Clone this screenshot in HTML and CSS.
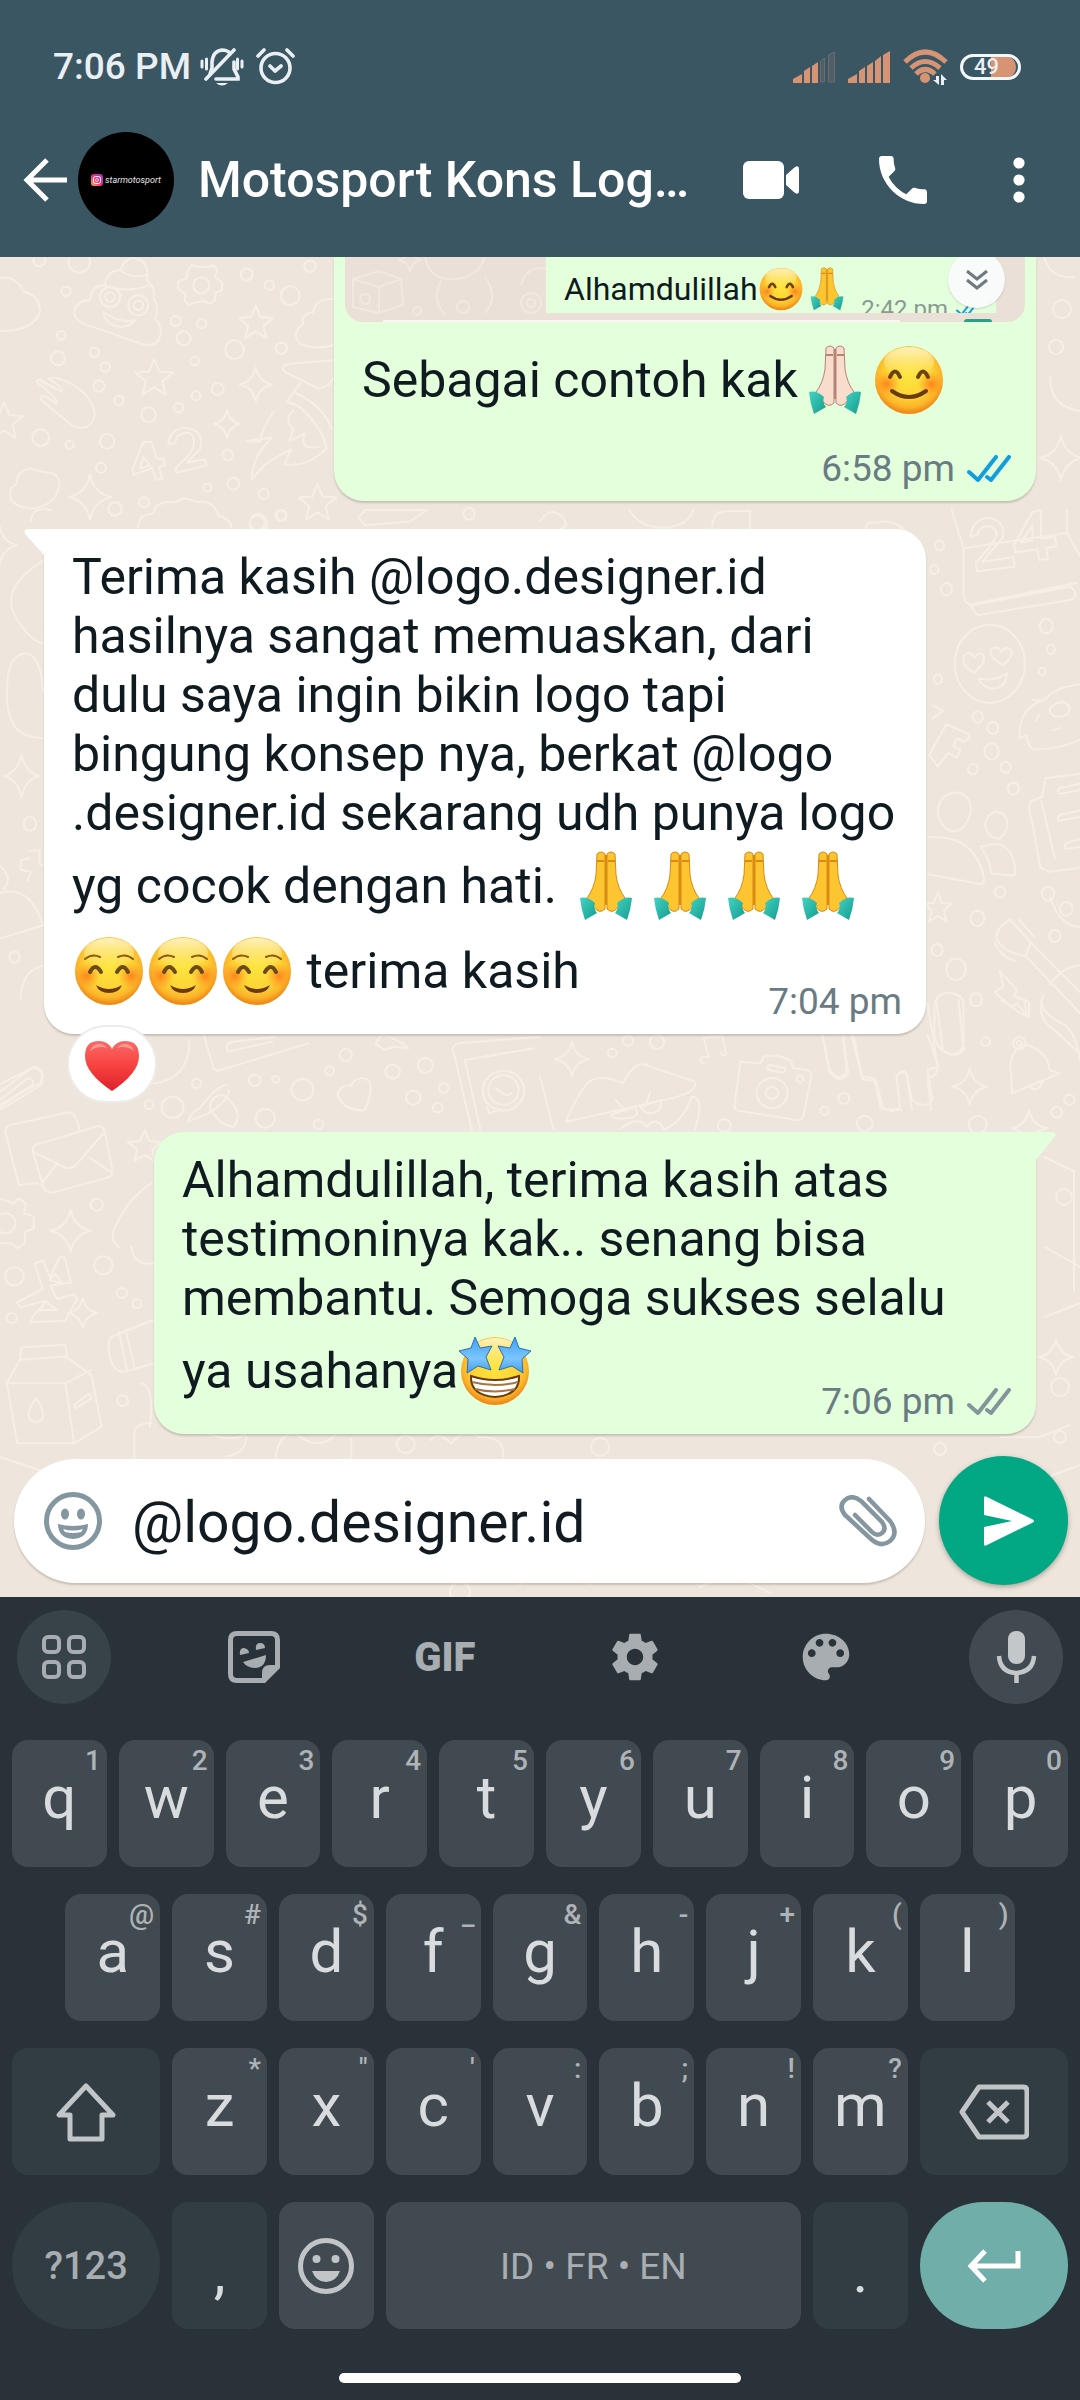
FILE: index.html
```
<!DOCTYPE html>
<html lang="id">
<head>
<meta charset="utf-8">
<meta name="viewport" content="width=device-width, initial-scale=1">
<title>Motosport Kons Logo</title>
<link rel="stylesheet" href="styles.css">
</head>
<body>
<svg class="defs" aria-hidden="true">
  <defs>
    <radialGradient id="gFace" cx="50%" cy="42%" r="56%">
      <stop offset="0" stop-color="#fde63f"/><stop offset=".6" stop-color="#fcd435"/><stop offset=".85" stop-color="#fbb52a"/><stop offset="1" stop-color="#ef8a17"/>
    </radialGradient>
    <linearGradient id="gShine" x1="0" y1="0" x2="0" y2="1">
      <stop offset="0" stop-color="#fff6cf" stop-opacity=".9"/><stop offset="1" stop-color="#fff2a0" stop-opacity="0"/>
    </linearGradient>
    <radialGradient id="gBlush"><stop offset="0" stop-color="#ff6a13" stop-opacity=".75"/><stop offset="1" stop-color="#ff8a1c" stop-opacity="0"/></radialGradient>
    <linearGradient id="gCuff" x1="0" y1="0" x2="1" y2="1"><stop offset="0" stop-color="#45d3c0"/><stop offset="1" stop-color="#139c92"/></linearGradient>
    <linearGradient id="gStar" x1="0" y1="0" x2="0" y2="1"><stop offset="0" stop-color="#3aa0f5"/><stop offset=".6" stop-color="#7cc6fb"/><stop offset="1" stop-color="#3f9df0"/></linearGradient>
    <linearGradient id="gHeart" x1="0" y1="0" x2="0" y2="1"><stop offset="0" stop-color="#fb6a66"/><stop offset=".5" stop-color="#f7423f"/><stop offset="1" stop-color="#de1f2c"/></linearGradient>
    <linearGradient id="gInsta" x1="0" y1="1" x2="1" y2="0"><stop offset="0" stop-color="#fdb24a"/><stop offset=".5" stop-color="#ee2a7b"/><stop offset="1" stop-color="#8a3ad0"/></linearGradient>
    <symbol id="base" viewBox="0 0 74 70">
      <circle cx="37" cy="35" r="34" fill="url(#gFace)"/>
      <ellipse cx="37" cy="17" rx="25" ry="15" fill="url(#gShine)"/>
    </symbol>
    <symbol id="smile" viewBox="0 0 74 70">
      <use href="#base"/>
      <circle cx="15" cy="39" r="13" fill="url(#gBlush)"/><circle cx="59" cy="39" r="13" fill="url(#gBlush)"/>
      <path d="M18 32q5-11 10 0M46 32q5-11 10 0" fill="none" stroke="#6b4210" stroke-width="4" stroke-linecap="round"/>
      <path d="M20 46q17 12 34 0" fill="none" stroke="#6b3a0c" stroke-width="4" stroke-linecap="round"/>
    </symbol>
    <symbol id="relaxed" viewBox="0 0 74 70">
      <use href="#base"/>
      <circle cx="15" cy="40" r="13" fill="url(#gBlush)"/><circle cx="59" cy="40" r="13" fill="url(#gBlush)"/>
      <path d="M13 23q7-6 15-2M61 23q-7-6-15-2" fill="none" stroke="#8a5a16" stroke-width="2" stroke-linecap="round"/>
      <path d="M18 36q5-10 11 0M45 36q6-10 11 0" fill="none" stroke="#6b4a1c" stroke-width="4" stroke-linecap="round"/>
      <path d="M24 49q13 8 26 0-3 8-13 8t-13-8z" fill="#6b3a0c"/>
    </symbol>
    <symbol id="pray" viewBox="0 0 74 70">
      <g stroke-linejoin="round">
        <path d="M28 3Q32-1 36 3V58Q30 64 24 55L18 47Q25 38 27 24Z" fill="currentColor" stroke="var(--edge)"/>
        <path d="M46 3Q42-1 38 3V58Q44 64 50 55L56 47Q49 38 47 24Z" fill="currentColor" stroke="var(--edge)"/>
        <path d="M37 4V54M28 10h7M39 10h7" stroke="var(--edge)" stroke-width="2" fill="none"/>
        <path d="M11 47Q18 45 26 52 24 57 28 62L16 69Q12 58 11 47Z" fill="url(#gCuff)"/>
        <path d="M63 47Q56 45 48 52 50 57 46 62L58 69Q62 58 63 47Z" fill="url(#gCuff)"/>
      </g>
    </symbol>
    <symbol id="starstruck" viewBox="0 0 74 70">
      <use href="#base"/>
      <path d="M13 40Q37 48 61 40 62 59 37 61 12 59 13 40Z" fill="#fff" stroke="#6b3a0c" stroke-width="2"/>
      <path d="M14 46q23 6 46 0M17 53q20 5 40 0" fill="none" stroke="#a9733c" stroke-width="2"/>
      <g fill="url(#gStar)" stroke="#2f6fb0" stroke-width="1" stroke-linejoin="round">
        <path d="M17 1l5 11 12-2-6 11 5 13-13-4-11 7 1-14L1 15l12-3z"/>
        <path d="M57 1l-5 11-12-2 6 11-5 13 13-4 11 7-1-14 9-8-12-3z"/>
      </g>
    </symbol>
    <symbol id="heart" viewBox="0 0 54 50">
      <path d="M27 50Q0 32 0 15 0 0 14 0 23 0 27 8 31 0 40 0 54 0 54 15 54 32 27 50z" fill="url(#gHeart)"/>
      <path d="M5 10Q7 3 14 3q5 0 8 4-9-3-17 3zM32 7q3-4 8-4 7 0 9 7-8-6-17-3z" fill="#fff" opacity=".35"/>
    </symbol>
    <symbol id="ticks" viewBox="0 0 44 28">
      <path d="M2 17l9 8L29 2M20 22l4 3L42 2" fill="none" stroke="currentColor" stroke-width="4" stroke-linecap="round" stroke-linejoin="round"/>
    </symbol>
    <symbol id="sp" viewBox="-20 -20 40 40" overflow="visible"><path d="M0-18Q3-3 17 0 3 3 0 18-3 3-17 0-3-3 0-18z"/></symbol>
    <symbol id="st" viewBox="-20 -20 40 40" overflow="visible"><path d="M0-18l5 12 13 1-10 8 3 13-11-7-11 7 3-13-10-8 13-1z"/></symbol>
  </defs>
</svg>

<header class="top">
  <div class="status">
    <span class="clock">7:06 PM</span>
    <svg class="bell" viewBox="0 0 44 38" fill="none" stroke="currentColor" stroke-width="3.6" stroke-linecap="round">
      <path d="M2 13v6M6.500 11v10M42 13v6M37.500 11v10" stroke-width="3"/>
      <path d="M12 20v-6Q13 3 22 2q5 0 8 3M34 14v7l4 8v2H16M12 20l-2 6"/>
      <path d="M34 2L6 31"/><path d="M16 35h12q-6 5-12 0z" fill="currentColor" stroke="none"/>
    </svg>
    <svg class="alarm" viewBox="0 0 39 37" fill="none" stroke="currentColor" stroke-width="3.600" stroke-linecap="round" stroke-linejoin="round">
      <circle cx="19.500" cy="20" r="14.500"/><path d="M14 18l5 5 6-5M2 8l6-6M37 8l-6-6"/>
    </svg>
    <span class="grow"></span>
    <svg class="signal" viewBox="0 0 43 32" fill="#d69474"><path d="M0 32v-4l9-5v9zM11 32V20l6-4v16zM19 32V15l6-4v21z"/><path d="M27.500 31V10l4-3v24zM35.500 31V4l6-3v30z" fill="#4f5e67" stroke="#6a6d6f"/></svg>
    <svg class="signal" viewBox="0 0 43 32" fill="#d69474"><path d="M0 32v-4l9-5v9zM11 32V20l6-4v16zM19 32V15l6-4v21zM27 32V10l6-5v27zM35 32V4l7-4v32z"/></svg>
    <svg class="wifi" viewBox="0 0 45 36"><g fill="none" stroke="#d69474" stroke-width="5"><path d="M2 13Q22-7 43 13M8 19q14-13 29 0M13 25q9-9 19 0"/></g><circle cx="22" cy="29" r="5" fill="#d69474"/><path d="M30 31h3v-4h3v9zM38 36V25l6 6h-3v5z" fill="#e9eff2"/></svg>
    <span class="battery">49</span>
  </div>
  <div class="appbar">
    <button class="icon-btn back" aria-label="Kembali"><svg viewBox="0 0 44 44" fill="none" stroke="currentColor" stroke-width="5"><path d="M44 22H4M24 2L4 22l20 20"/></svg></button>
    <span class="avatar"><svg viewBox="0 0 12 12"><rect width="12" height="12" rx="3" fill="url(#gInsta)"/><rect x="2.500" y="2.500" width="7" height="7" rx="2" fill="none" stroke="#fff"/><circle cx="6" cy="6" r="1.500" fill="none" stroke="#fff" stroke-width=".8"/></svg><i>starmotosport</i></span>
    <h1>Motosport Kons Log…</h1>
    <button class="icon-btn video" aria-label="Panggilan video"><svg viewBox="0 0 56 38" fill="currentColor"><rect width="41" height="38" rx="6"/><path d="M43 14l9-8q4-2 4 2v22q0 4-4 2l-9-8z"/></svg></button>
    <button class="icon-btn phone" aria-label="Panggilan suara"><svg viewBox="3 3 18 18" fill="currentColor"><path d="M6.620 10.790c1.440 2.830 3.760 5.140 6.590 6.590l2.200-2.200c.270-.270.670-.360 1.020-.240 1.120.370 2.330.570 3.570.570.550 0 1 .450 1 1V20c0 .550-.450 1-1 1-9.390 0-17-7.610-17-17 0-.550.450-1 1-1h3.500c.550 0 1 .450 1 1 0 1.250.200 2.450.570 3.570.110.350.030.740-.250 1.020l-2.200 2.200z"/></svg></button>
    <button class="icon-btn dots" aria-label="Menu"><svg viewBox="0 0 12 46" fill="currentColor"><circle cx="6" cy="6" r="5.600"/><circle cx="6" cy="23" r="5.600"/><circle cx="6" cy="40" r="5.600"/></svg></button>
  </div>
</header>

<main class="chat">
  <svg class="wallpaper" viewBox="0 0 1080 1340" preserveAspectRatio="xMidYMin slice" aria-hidden="true">
    <g transform="scale(.3333)">
      <path d="M0 62q50-5 70 42 50 10 50 60-20 60-120 58M270 130q5-50 45-45 5-45 45-45 20-45 50-35 40 10 30 65 30 20 20 55 20 20 5 60 30 30 10 65-15 20-45 12L250 200q-40-20-20-55 15-15 40-15zM310 165q50 35 95 25-20 25-55 18-35-8-40-43zM360 38q30 30 80 15M315 85q60 25 135 0"/>
      <circle cx="330" cy="120" r="30"/><circle cx="415" cy="145" r="30"/><circle cx="330" cy="120" r="14"/><circle cx="415" cy="145" r="14"/>
      <path d="M575 25l20 5h25l20-5 12 15-8 20 22 15v25l-20 8v20l-15 12-20-8-30 5-15 8-12-15 2-20-22-15v-20l25-10 3-20z"/><circle cx="604" cy="85" r="24"/>
      <path d="M1000 125q-55 0-60 40-40 10-30 35-40 30-10 60 40 20 100 5M1000 310l-130 10q-35 5-15 25 60 30 100 50 30-5 45-30M900 380l-40 55M880 405q90 40 115 110M860 435q40 10 50 25 60 60 70 115M820 465q-35 50-40 90l-40-3 75-10q-60 60-60 125l40-45q30-20 78-45l-20 45q70 10 130-50M880 460q-30 30 0 55l-10 35 45-20q-20 50 40 40"/>
      <path d="M110 375q5-15 20 0l55 30q5-15-40-40 5-10 45 5 80 30 95 100-10 60-70 35L125 430q-10-20 15-10l30 20q5-15-60-65z"/>
      <path d="M50 680q0-40 40-45l40 10q50 0 48 40-10 60-80 70-80-5-65-60zM415 810q0-40 45-40 5-40 70-35 20-20 60 0 50-10 65 40 40 15 40 35"/>
      <use href="#st" x="400" y="300" width="125" height="125"/><use href="#st" x="710" y="140" width="115" height="115"/><use href="#st" x="-50" y="430" width="125" height="125"/><use href="#st" x="890" y="675" width="125" height="125"/>
      <use href="#sp" x="710" y="325" width="115" height="115"/><use href="#sp" x="635" y="455" width="92" height="92"/><use href="#sp" x="195" y="645" width="150" height="150"/><use href="#sp" x="-60" y="805" width="120" height="120"/>
      <circle cx="238" cy="15" r="32"/><circle cx="118" cy="10" r="18"/><circle cx="198" cy="103" r="14"/><circle cx="184" cy="235" r="13"/><circle cx="174" cy="304" r="21"/><circle cx="283" cy="286" r="14"/><circle cx="316" cy="330" r="14"/><circle cx="297" cy="387" r="17"/><circle cx="357" cy="430" r="14"/><circle cx="446" cy="473" r="22"/><circle cx="536" cy="452" r="14"/><circle cx="588" cy="416" r="13"/><circle cx="653" cy="396" r="18"/><circle cx="551" cy="244" r="21"/><circle cx="527" cy="192" r="15"/><circle cx="605" cy="200" r="14"/><circle cx="584" cy="312" r="13"/><circle cx="704" cy="278" r="28"/><circle cx="844" cy="274" r="17"/><circle cx="740" cy="53" r="18"/><circle cx="808" cy="85" r="14"/><circle cx="871" cy="116" r="28"/><circle cx="930" cy="28" r="17"/><circle cx="122" cy="542" r="25"/><circle cx="209" cy="564" r="12"/><circle cx="321" cy="553" r="22"/><circle cx="303" cy="632" r="15"/><circle cx="345" cy="756" r="20"/><circle cx="432" cy="736" r="15"/><circle cx="622" cy="692" r="12"/><circle cx="700" cy="680" r="18"/><circle cx="683" cy="594" r="16"/><circle cx="791" cy="711" r="15"/><circle cx="842" cy="775" r="16"/><circle cx="772" cy="798" r="22"/>
      <path d="M430 555l25 0 15 50 20 0 5 20-18 5 10 35-20 3-10-35-55 20-5-15zM430 600l-10 35 30-10zM505 560q5-45 50-48 60 5 45 65l-40 40 55-10 5 18-90 22-3-15q60-50 55-80-5-40-50-15-5 25-15 23z"/>
    </g>
    <g transform="translate(0 253) scale(.3444 .3827)">
      <path d="M130 130Q-20 210 60 300 90 340 125 350M20 480q0-110 60-105 40 10 45 100M20 480q0 120 105 115M0 930q40 30 10 60M0 1000q90-20 125 85L0 1120M60 1280q0-80 70-90M0 1560q80-50 115-60 20-40-15-45L0 1500"/>
      <path d="M85 890l30 0 0 35 15 5M80 970l10-25-30-5 0-25 25-5M150 0q-60-10-60 30M1060 40l-20-20 20-20 180 0-50 30z"/>
      <use href="#sp" x="0" y="630" width="125" height="130"/>
      <circle cx="87" cy="820" r="18"/><circle cx="42" cy="1168" r="15"/><circle cx="818" cy="15" r="14"/><circle cx="750" cy="35" r="25"/><circle cx="1362" cy="10" r="16"/>
    </g>
    <g transform="translate(540 253) scale(.3444 .3827)">
      <path d="M1195 0l35 100v120q0 30 30 25l300-55M1250 250l290-50q30 25 0 35l-270 40zM1230 100l300-40M1530 0v60l38 60M260 0q30 50 110 45 60-5 75-45M500 48q0-45 40-45l70 0v45M0 30q30-40 60-15t0 35M945 48q0-20 40-15 30-10 70 15"/>
      <path d="M1250 70q5-45 50-50 50 5 45 50l-60 65 90-12 3 25-110 12-2-22q60-60 60-75-5-25-35-20-20 5-20 22zM1430 5l25-5 0 75 40-5 5 25-30 5 5 28-25 3-5-28-65 8-3-20zM1430 40l-35 45 35-5z"/>
      <circle cx="1306" cy="402" r="102"/><path d="M1260 425q-40-20-28-45 15-15 30 5 20-20 28 0-2 20-30 40zM1345 405q-45-20-35-42 18-10 30 8 15-20 30-2 0 20-25 36zM1272 440q50 10 85-15-5 35-30 40-40 5-55-25z"/>
      <path d="M1568 455q-80 10-100 40-80 20-75 100l20-5q5 40 35 35 60 0 120-25M1480 520q30-30 55-10 10 30-30 30-25 0-25-20zM1430 495l25 5M1440 550l10-15M1490 575l20-5M1140 510l30 15-30 20M1130 640l50-80 65 25q5 15-15 20l-20-8-10 20 20 10-10 20-25-12-30 35zM1568 690l-100 10-10 50-30 10q-15 10 0 50l25 125 25 10 90-10M1455 760l40 150M1568 715l-60 12q-10 12 0 15l60-10M1568 785l-60 12q-10 12 0 15l60-10M1568 860l-40 10q-10 12 0 15l40-5"/>
      <path d="M1203 738q50 0 48 50-15 50-48 52-40-5-48-52 5-45 48-50zM1325 788q35 5 32 40-15 35-30 30-30-5-35-35 5-30 33-35zM1125 855q140-10 165 110 0 12-12 12l-150-25M1280 880q90-30 100 60 0 15-10 15l-60-5q0-30-30-70M1325 1120q0-30 40-50l60 60-15 35q-60-5-85-45zM1425 1130l143 130M1410 1165l158 150M1460 1270q-20 60 35 90l73 60M1320 1130q20 40 60 50M1390 1070l45 45M1480 1240q40-50 88-50M1335 1205l50 50-10 15 45 15 0 40-35-15-65-50 25-15zM1145 1370l0-70q5-40 40-38 45 0 45 35v90q-5 35-35 35-40-5-50-52M1125 1370l30 80q0 30-30 35M820 1370l20 90q30 40 50 5l-10-95M910 1370l25 110 35 5 20 80 60 3M1035 1480q20-25 30-5l15 93M1125 1485l10 83"/>
      <circle cx="1160" cy="93" r="13"/><circle cx="1145" cy="156" r="12"/><circle cx="1180" cy="207" r="16"/><circle cx="1470" cy="303" r="19"/><circle cx="1483" cy="364" r="12"/><circle cx="1458" cy="422" r="10"/><circle cx="1155" cy="442" r="12"/><circle cx="1271" cy="541" r="15"/><circle cx="1315" cy="569" r="16"/><circle cx="1311" cy="631" r="21"/><circle cx="1257" cy="677" r="14"/><circle cx="1352" cy="672" r="14"/><circle cx="1374" cy="728" r="16"/><circle cx="1336" cy="998" r="15"/><circle cx="1475" cy="1003" r="18"/><circle cx="1270" cy="1067" r="20"/><circle cx="1528" cy="1042" r="18"/><circle cx="1495" cy="1113" r="16"/><circle cx="1153" cy="1150" r="16"/><circle cx="1208" cy="1200" r="28"/><circle cx="1266" cy="1280" r="17"/>
      <use href="#st" x="1100" y="995" width="110" height="90"/>
    </g>
    <g transform="translate(0 773) scale(.3444 .3333)">
      <path d="M0 185l90-70q45 0 30 50L0 240M0 210l80-65q20 0 15 20L0 225M15 305q0-15 15-20l170-38q20 0 30 50M15 305l40 160 55-5M95 365q0-20 15-22l175-55q15 0 20 20l22 115q0 15-15 20l-160 45q-20 0-25-15zM100 368l90 45q20 5 30-8l80-95M118 465l45-60M325 428l-65-45"/>
      <path d="M590 10l30 105q5 10 20 5l255-80M660 60q-5-20 15-25L800 20M660 65l130-30M550 30q0 120-105 130M345 650q-30-20-10-60 40-90 105-130M380 650q10 60 65 50M0 505l40 15 15-15 20 15-5 30 28 10v35l-25 10 0 35-20 15-20-15H0"/><circle cx="15" cy="580" r="30"/>
      <path d="M100 700l25-8 20 50 28-60 15 0 18 75-60 10 20 40 50-15 8 15-35 65-100 5 5-15 40-50-75 20-10-15 75-40zM160 730l20 30-35-10zM135 815l30 25-50 0zM315 950q0-30 20-35l110-45M315 950q5 80 50 75l80-25M345 905l25 120M365 900l25 110"/>
      <path d="M60 960q0-8 10-8l120-8 5 35-135 10zM60 985l-40 75 30 180 165 0-25-180H22M190 980l75 55 30 155-80 50M190 1060l75-40M215 1125l45-35 5 15-45 30zM105 1105q-30 40-20 60 15 20 35 5 15-20-15-65zM390 1285v-80q5-25 50-25M410 1060q40 10 25 130"/>
      <path d="M545 275q10-30 35-40 50-70 80-70M545 275l60-25q60-40 60-70M610 235q0-40 40-40 60 50 30 95-40 0-70-55zM1060 240q-60 5-80-45 5-30 40-28 10-25 35-22 40 5 5 95zM1090 40l20-30 60 30 15 15-40-5-30 10zM1320 80q-15-30 10-40l240-20M1320 80l50 220M1350 90l200-35M1350 90l45 210"/><circle cx="1462" cy="182" r="60"/><circle cx="1462" cy="180" r="44"/><path d="M1440 175q30 30 45 15M1415 230l5 20 35-12"/>
      <use href="#st" x="360" y="295" width="120" height="110"/><use href="#sp" x="135" y="530" width="140" height="145"/><use href="#sp" x="190" y="800" width="100" height="100"/>
      <circle cx="433" cy="224" r="13"/><circle cx="501" cy="232" r="32"/><circle cx="571" cy="160" r="14"/><circle cx="739" cy="151" r="17"/><circle cx="800" cy="148" r="10"/><circle cx="770" cy="265" r="28"/><circle cx="878" cy="179" r="32"/><circle cx="957" cy="122" r="13"/><circle cx="1004" cy="75" r="18"/><circle cx="1140" cy="125" r="21"/><circle cx="1235" cy="106" r="22"/><circle cx="1200" cy="203" r="21"/><circle cx="1288" cy="174" r="14"/><circle cx="1271" cy="233" r="14"/><circle cx="925" cy="283" r="14"/><circle cx="281" cy="524" r="18"/><circle cx="300" cy="706" r="27"/><circle cx="42" cy="739" r="27"/><circle cx="354" cy="789" r="15"/><circle cx="397" cy="821" r="13"/><circle cx="34" cy="864" r="15"/><circle cx="356" cy="1112" r="16"/><circle cx="1178" cy="1243" r="26"/>
      <path d="M800 1285q10-80 60-75M860 1210q60 60 120 0M1020 1285v-60M600 1210q80 30 115 0 5 60-60 70M1250 1230q20-30 60 10 40-50 80-20 80 0 70 60"/>
    </g>
    <g transform="translate(540 743) scale(.3444 .3333)">
      <path d="M75 365q40-100 75-125 40-15 90 10 40-80 80-50l130 45q10 35-90 55L75 365zM205 345l70-25q20 30-20 35t-50-10zM290 320l60-20q10 40-40 40zM220 300l30 35M320 275l-15 45M235 385q50-40 75-5 30-35 50 10 60-30 80-100 40 0 10 100M0 230l40 160M585 185l55 5 10-20q50-10 80 15l5 20 40 5q15 5 12 20l-22 120q-5 12-20 10l-170-28q-12-5-10-20l15-110q0-15 5-17zM665 195l45 8q5 12-5 15l-40-8q-10-10 0-15z"/><circle cx="674" cy="279" r="45"/><circle cx="674" cy="279" r="18"/><circle cx="755" cy="237" r="10"/>
      <path d="M475 190q-20-10 0-22l15 5-15-60 55-5 10 55q-10 10-15-5M820 105l20 110q30 40 55 5l-15-115M905 105l30 130q10 10 40 5l20 80q30 25 50 0l-10-90q10-20 30-10l15 80q40 30 60 0l-15-90 30-10-30-190M1150 0l20 150q30 30 60 0L1215 0M1340 0l30 20 15-10 30 40-10-50M1455 0q0 40 60 70 40 20 53 110M1370 280q0-50-5-80 5-60 50-65 60 20 65 75l28 10-80 35zM1425 262q20 20 35-20"/><circle cx="1392" cy="130" r="18"/><circle cx="1392" cy="130" r="7"/>
      <use href="#sp" x="35" y="120" width="115" height="115"/><use href="#sp" x="1185" y="200" width="125" height="120"/><use href="#sp" x="1360" y="325" width="120" height="120"/>
      <circle cx="255" cy="122" r="15"/><circle cx="210" cy="159" r="13"/><circle cx="340" cy="126" r="21"/><circle cx="882" cy="295" r="16"/><circle cx="826" cy="332" r="12"/><circle cx="943" cy="370" r="23"/><circle cx="535" cy="377" r="19"/><circle cx="1294" cy="125" r="13"/><circle cx="1500" cy="337" r="16"/><circle cx="1537" cy="299" r="15"/><circle cx="1271" cy="374" r="26"/>
    </g>
    <g>
      <path d="M1044 0q6 22 30 20M1050 120q0 30 30 34M1050 640q10 30 30 30M1045 990l35 20M1045 1060l35-14M1048 1220l32-12M1044 900l30 14v120M0 1200l60 20 4 60M300 1310q30-30 60 10M520 1328q40-40 70 0M700 1330l30-14 40 20M1000 1180h40l30-12"/>
      <circle cx="1062" cy="52" r="9"/><circle cx="1056" cy="90" r="7"/><circle cx="1064" cy="940" r="8"/><circle cx="1060" cy="1130" r="9"/><circle cx="940" cy="1192" r="6"/><circle cx="600" cy="1190" r="9"/><circle cx="460" cy="1335" r="10"/><circle cx="1060" cy="1180" r="6"/>
      <use href="#sp" x="1036" y="176" width="50" height="50"/><use href="#sp" x="1036" y="1080" width="40" height="40"/>
    </g>
  </svg>

  <article class="bubble sent first">
    <div class="photo">
      <svg class="photo-doodles" viewBox="0 0 201 65" aria-hidden="true"><path d="M8 22l26-8 22 8 2 26-24 8-26-6zM8 22l26 8 22-8M34 30v26M80 0q4 20 22 22 30 2 38-22M96 24q-10 20 4 34M140 20q14 20 0 36M176 28q6-20 25-16"/><circle cx="20" cy="42" r="5"/><circle cx="72" cy="54" r="4"/><circle cx="118" cy="50" r="6"/><circle cx="186" cy="46" r="10"/><circle cx="186" cy="46" r="4"/><use href="#sp" x="52" y="-10" width="26" height="26"/></svg>
      <div class="inner">
        <span class="inner-text">Alhamdulillah<svg class="emoji small" role="img" aria-label="😊"><use href="#smile"/></svg><svg class="emoji small pray" role="img" aria-label="🙏"><use href="#pray"/></svg></span>
        <span class="inner-time">2:42 pm <svg class="ticks read"><use href="#ticks"/></svg></span>
      </div>
      <span class="bar"></span><span class="dot"></span>
      <span class="jump"><svg viewBox="0 0 22 20" fill="none" stroke="currentColor" stroke-width="3"><path d="M1 1l10 8L21 1M1 10l10 8 10-8"/></svg></span>
    </div>
    <p>Sebagai contoh kak<svg class="emoji pray light" role="img" aria-label="🙏🏻"><use href="#pray"/></svg><svg class="emoji" role="img" aria-label="😊"><use href="#smile"/></svg></p>
    <div class="meta own-line"><time>6:58 pm</time><svg class="ticks read" role="img" aria-label="Dibaca"><use href="#ticks"/></svg></div>
  </article>

  <article class="bubble received">
    <p>Terima kasih @logo.designer.id<br>hasilnya sangat memuaskan, dari<br>dulu saya ingin bikin logo tapi<br>bingung konsep nya, berkat @logo<br>.designer.id sekarang udh punya logo<br>yg cocok dengan hati. <svg class="emoji pray" role="img" aria-label="🙏"><use href="#pray"/></svg><svg class="emoji pray" role="img" aria-label="🙏"><use href="#pray"/></svg><svg class="emoji pray" role="img" aria-label="🙏"><use href="#pray"/></svg><svg class="emoji pray" role="img" aria-label="🙏"><use href="#pray"/></svg><br><svg class="emoji" role="img" aria-label="☺️"><use href="#relaxed"/></svg><svg class="emoji" role="img" aria-label="☺️"><use href="#relaxed"/></svg><svg class="emoji" role="img" aria-label="☺️"><use href="#relaxed"/></svg> terima kasih</p>
    <div class="meta"><time>7:04 pm</time></div>
  </article>
  <span class="reaction"><svg role="img" aria-label="❤️"><use href="#heart"/></svg></span>

  <article class="bubble sent last">
    <p>Alhamdulillah, terima kasih atas<br>testimoninya kak.. senang bisa<br>membantu. Semoga sukses selalu<br>ya usahanya<svg class="emoji" role="img" aria-label="🤩"><use href="#starstruck"/></svg></p>
    <div class="meta"><time>7:06 pm</time><svg class="ticks" role="img" aria-label="Terkirim"><use href="#ticks"/></svg></div>
  </article>

  <form class="composer">
    <div class="field">
      <button type="button" class="icon-btn face" aria-label="Emoji"><svg viewBox="0 0 58 58"><circle cx="29" cy="29" r="26.500" fill="none" stroke="currentColor" stroke-width="5"/><ellipse cx="21" cy="22" rx="4" ry="5.500" fill="currentColor"/><ellipse cx="37" cy="22" rx="4" ry="5.500" fill="currentColor"/><path d="M14 32q15 4 30 0 0 14-15 15-15-1-15-15z" fill="currentColor"/><path d="M19 37q10 3 20 0l-2 3q-8 2-16 0z" fill="#fff"/></svg></button>
      <input type="text" aria-label="Pesan" value="@logo.designer.id">
      <button type="button" class="icon-btn clip" aria-label="Lampirkan"><svg viewBox="0 0 58 52" fill="none" stroke="currentColor" stroke-width="4.500" stroke-linecap="round"><path d="M30 4L51 26Q60 38 51 46 42 53 32 44L6 20Q-1 11 6 5 13-1 22 6L43 27Q48 34 43 38 38 42 33 37L16 20"/></svg></button>
    </div>
    <button class="send" aria-label="Kirim"><svg viewBox="0 0 50 50" fill="#fff"><path d="M0 2Q0-1 3 1L48 23q4 2 0 4L3 49q-3 2-3-1V31l28-6L0 19z"/></svg></button>
  </form>
</main>

<section class="keyboard" aria-label="Papan ketik">
  <div class="tools">
    <button class="tool filled" aria-label="Menu"><svg class="w44" viewBox="0 0 44 44" fill="none" stroke="currentColor" stroke-width="4"><rect x="2" y="2" width="15" height="15" rx="4"/><rect x="27" y="2" width="15" height="15" rx="4"/><rect x="2" y="27" width="15" height="15" rx="4"/><rect x="27" y="27" width="15" height="15" rx="4"/></svg></button>
    <button class="tool" aria-label="Stiker"><svg class="w52" viewBox="0 0 52 52"><path d="M9 2.500h34q6.500 0 6.500 6.500v27L36 49.500H9Q2.500 49.500 2.500 43V9q0-6.500 6.500-6.500z" fill="none" stroke="currentColor" stroke-width="5"/><path d="M34 50V42q0-8 8-8h9L36 50zM12 24q-1-7 4-7 5 1 5 5zM28 19q-1-7 4-7 5 0 5 5zM15 31l23-7q0 12-10 13-9 0-13-6z" fill="currentColor"/></svg></button>
    <button class="tool gif">GIF</button>
    <button class="tool" aria-label="Setelan"><svg class="w56" viewBox="0 0 24 24" fill="currentColor"><path d="M19.430 12.980c.040-.320.070-.640.070-.980s-.030-.660-.070-.980l2.110-1.650c.190-.150.240-.420.120-.640l-2-3.460c-.120-.220-.390-.300-.610-.220l-2.490 1c-.520-.400-1.080-.730-1.690-.980l-.380-2.650C14.460 2.180 14.250 2 14 2h-4c-.250 0-.460.180-.490.420l-.380 2.650c-.610.250-1.170.590-1.690.980l-2.490-1c-.230-.090-.490 0-.610.220l-2 3.460c-.130.220-.070.490.120.640l2.110 1.650c-.040.320-.070.650-.070.980s.030.660.070.980l-2.110 1.650c-.190.150-.240.420-.120.640l2 3.460c.120.220.390.300.610.220l2.490-1c.520.400 1.080.730 1.690.980l.380 2.650c.030.240.240.420.490.420h4c.250 0 .460-.180.490-.420l.380-2.650c.610-.250 1.170-.590 1.690-.980l2.490 1c.230.090.490 0 .610-.220l2-3.460c.120-.220.070-.490-.120-.640l-2.110-1.650zM12 15.500c-1.930 0-3.500-1.570-3.500-3.500s1.570-3.500 3.500-3.500 3.500 1.570 3.500 3.500-1.570 3.500-3.500 3.500z"/></svg></button>
    <button class="tool" aria-label="Tema"><svg class="w62" viewBox="0 0 24 24" fill="currentColor"><path d="M12 3c-4.970 0-9 4.030-9 9s4.030 9 9 9c.830 0 1.500-.670 1.500-1.500 0-.390-.150-.740-.390-1.010-.230-.260-.380-.610-.380-.990 0-.830.670-1.500 1.500-1.500H16c2.760 0 5-2.240 5-5 0-4.420-4.030-8-9-8zm-5.500 9c-.830 0-1.500-.670-1.500-1.500S5.670 9 6.500 9 8 9.670 8 10.500 7.330 12 6.500 12zm3-4C8.670 8 8 7.330 8 6.500S8.670 5 9.500 5s1.500.670 1.500 1.500S10.330 8 9.500 8zm5 0c-.830 0-1.500-.670-1.500-1.500S13.670 5 14.500 5s1.500.670 1.500 1.500S15.330 8 14.500 8zm3 4c-.830 0-1.500-.670-1.500-1.500S16.670 9 17.500 9s1.500.670 1.500 1.500-.670 1.500-1.500 1.500z"/></svg></button>
    <button class="tool filled mic" aria-label="Dikte"><svg class="w52" viewBox="0 0 52 52"><rect x="18" width="17" height="33" rx="8" fill="currentColor"/><path d="M9 25q1 16 17 17 17-1 18-17M26.500 42v10" fill="none" stroke="currentColor" stroke-width="4.500"/></svg></button>
  </div>
  <div class="row">
    <button class="key">q<sup>1</sup></button><button class="key">w<sup>2</sup></button><button class="key">e<sup>3</sup></button><button class="key">r<sup>4</sup></button><button class="key">t<sup>5</sup></button><button class="key">y<sup>6</sup></button><button class="key">u<sup>7</sup></button><button class="key">i<sup>8</sup></button><button class="key">o<sup>9</sup></button><button class="key">p<sup>0</sup></button>
  </div>
  <div class="row inset">
    <button class="key">a<sup>@</sup></button><button class="key">s<sup>#</sup></button><button class="key">d<sup>$</sup></button><button class="key">f<sup>_</sup></button><button class="key">g<sup>&amp;</sup></button><button class="key">h<sup>-</sup></button><button class="key">j<sup>+</sup></button><button class="key">k<sup>(</sup></button><button class="key">l<sup>)</sup></button>
  </div>
  <div class="row">
    <button class="key wide dark" aria-label="Shift"><svg class="w62" viewBox="0 0 62 60" fill="none" stroke="currentColor" stroke-width="5" stroke-linejoin="round"><path d="M31 4L4 33h11v24h32V33h11z"/></svg></button>
    <button class="key">z<sup>*</sup></button><button class="key">x<sup>"</sup></button><button class="key">c<sup>'</sup></button><button class="key">v<sup>:</sup></button><button class="key">b<sup>;</sup></button><button class="key">n<sup>!</sup></button><button class="key">m<sup>?</sup></button>
    <button class="key wide dark" aria-label="Hapus"><svg class="w70" viewBox="0 0 70 56" fill="none" stroke="currentColor" stroke-width="5" stroke-linejoin="round"><path d="M20 3h44q4 0 4 4v42q0 4-4 4H20L3 28z"/><path d="M29 18l20 20M49 18L29 38"/></svg></button>
  </div>
  <div class="row">
    <button class="key wide dark round sym">?123</button>
    <button class="key dark low">,</button>
    <button class="key" aria-label="Emoji"><svg class="w56" viewBox="0 0 56 56"><circle cx="28" cy="28" r="25.500" fill="none" stroke="currentColor" stroke-width="5"/><circle cx="18.500" cy="21" r="4" fill="currentColor"/><circle cx="37.500" cy="21" r="4" fill="currentColor"/><path d="M14 33h28q-4 11-14 11T14 33z" fill="currentColor"/></svg></button>
    <button class="key space">ID • FR • EN</button>
    <button class="key dark low">.</button>
    <button class="key wide round enter" aria-label="Enter"><svg class="w54" viewBox="0 0 54 34" fill="none" stroke="currentColor" stroke-width="5"><path d="M51 2v15H4M18 2L4 17l14 15"/></svg></button>
  </div>
  <div class="home"></div>
</section>
</body>
</html>
```

FILE: styles.css
```
* { box-sizing: border-box; }
body {
  margin: 0;
  min-height: 100vh;
  display: flex;
  flex-direction: column;
  background: #283238;
  font-family: Roboto, "Noto Sans", sans-serif;
}
button, input { font: inherit; color: inherit; border: 0; padding: 0; margin: 0; background: none; }
svg { display: block; }
.defs { position: absolute; width: 0; height: 0; }
.icon-btn { flex: none; }
.icon-btn svg { width: 100%; height: 100%; }

/* Header */
.top { background: #3b5663; color: #fff; position: relative; z-index: 1; }
.status { display: flex; align-items: center; gap: 12px; height: 103px; padding: 30px 59px 0 53px; color: #e9eff2; }
.clock { font-size: 37px; font-weight: 500; line-height: 44px; }
.bell { width: 44px; height: 38px; }
.alarm { width: 39px; height: 37px; }
.clock + .bell { margin-left: -3px; }
.grow { flex: 1; }
.signal { width: 43px; height: 32px; }
.wifi { width: 45px; height: 36px; }
.battery {
  width: 61px; height: 26px; line-height: 20px; border: 3px solid #f4f7f8; border-radius: 13px;
  font-size: 22px; font-weight: 500; text-align: left; padding: 0 2px 0 11px;
  background: linear-gradient(90deg, transparent 40%, #d69474 40%) content-box;
}
.appbar { display: flex; align-items: center; height: 154px; padding: 0 55px 0 23px; }
.back { width: 44px; height: 44px; margin-right: 11px; }
.avatar {
  flex: none; width: 96px; height: 96px; border-radius: 50%; background: #000; margin-right: 24px;
  display: flex; align-items: center; justify-content: center; gap: 2px;
  font-size: 9px; color: #e6e6e6;
}
.avatar svg { width: 12px; height: 12px; }
h1 { flex: 1; margin: 0; font-size: 50px; font-weight: 500; line-height: 60px; white-space: nowrap; overflow: hidden; text-overflow: ellipsis; }
.video { width: 56px; height: 38px; }
.phone { width: 48px; height: 48px; margin-left: 80px; }
.dots { width: 12px; height: 46px; margin-left: 86px; }

/* Conversation */
.chat { position: relative; background: #eee6dd; display: flex; flex-direction: column; padding: 0 12px 12px 14px; color: #0f1b20; }
.wallpaper { position: absolute; inset: 0; width: 100%; height: 100%; fill: none; stroke: #f6efe8; stroke-width: 2; stroke-linejoin: round; stroke-linecap: round; }
.wallpaper path, .wallpaper circle, #sp path, #st path { vector-effect: non-scaling-stroke; }
.bubble {
  position: relative; width: 882px; padding: 19px 24px 10px 28px; border-radius: 30px;
  box-shadow: 0 2px 2px rgba(90, 80, 60, .25);
}
.bubble p { margin: 0; font-size: 50px; line-height: 59px; white-space: nowrap; }
.received { background: #fff; margin: 28px 0 0 30px; border-top-left-radius: 0; }
.sent { background: #e4ffdb; align-self: flex-end; margin-right: 32px; }
.last { border-top-right-radius: 0; margin-top: 29px; }
.first { width: 702px; padding-top: 0; border-radius: 0 0 30px 30px; }
.received::before, .last::before { content: ""; position: absolute; top: 0; width: 21px; height: 30px; }
.received::before { right: 100%; margin-right: -1px; background: #fff; clip-path: path("M21 0H5Q-2 0 2 6L21 27z"); }
.last::before { left: 100%; margin-left: -1px; background: #e4ffdb; clip-path: path("M0 0H16Q23 0 19 6L0 29z"); }
.emoji { display: inline-block; width: 74px; height: 70px; margin: 8px 0 7px; vertical-align: -25px; }
.pray { color: #fdc52f; --edge: #d98a14; }
.light { color: #f9dccb; --edge: #b58476; }
.meta { display: flex; justify-content: flex-end; align-items: center; gap: 12px; margin-top: -33px; font-size: 37px; line-height: 44px; color: #697b83; }
.sent .meta { padding-right: 1px; }
.bubble .own-line { margin-top: 25px; }
.ticks { width: 44px; height: 28px; color: #83949b; }
.read { color: #109fdc; }

.photo { position: relative; display: flex; height: 65px; margin: 0 -13px 15px -17px; padding: 0 29px 9px 0; background: #eae0d8; border-radius: 0 0 18px 18px; overflow: hidden; }
.photo-doodles { flex: none; width: 201px; height: 65px; fill: none; stroke: #f1e8e1; stroke-width: 2; }
.inner { flex: 1; display: flex; justify-content: space-between; background: #e4ffdb; padding: 0 18px; overflow: hidden; }
.inner-text { font-size: 32px; line-height: 64px; white-space: nowrap; }
.emoji.small { width: 48px; height: 44px; margin: 0 -1px; vertical-align: -11px; }
.inner-time { display: flex; gap: 8px; align-items: center; font-size: 24px; line-height: 28px; height: 28px; margin-top: 38px; color: #8a9a93; white-space: nowrap; }
.inner-time .ticks { width: 22px; height: 16px; }
.bar { position: absolute; left: 38px; right: 125px; bottom: 0; height: 2px; background: #fbf7f4; }
.dot { position: absolute; right: 33px; bottom: 0; width: 28px; height: 3px; border-radius: 14px 14px 0 0; background: #2aa184; }
.jump { position: absolute; right: 20px; top: -6px; width: 57px; height: 57px; border-radius: 50%; background: #f9fbfa; color: #6f7b80; display: flex; align-items: center; justify-content: center; box-shadow: 0 1px 2px rgba(0, 0, 0, .15); }
.jump svg { width: 22px; height: 20px; }

.reaction { position: relative; width: 90px; height: 78px; margin: -9px 0 0 53px; border-radius: 39px; background: #fff; border: 2px solid #ececea; display: flex; align-items: center; justify-content: center; }
.reaction svg { width: 54px; height: 50px; margin-top: 4px; }

.composer { position: relative; display: flex; align-items: center; gap: 14px; margin-top: 22px; }
.field { flex: 1; min-width: 0; display: flex; align-items: center; height: 124px; padding: 0 28px 0 30px; border-radius: 62px; background: #fff; color: #8496a0; box-shadow: 0 2px 2px rgba(90, 80, 60, .25); }
.face { width: 58px; height: 58px; }
.field input { flex: 1; min-width: 0; height: 80px; margin: 4px 20px 0 30px; font-size: 57px; color: #121b21; outline: none; }
.clip { width: 58px; height: 52px; }
.send { flex: none; width: 129px; height: 129px; border-radius: 50%; background: #02a884; display: flex; align-items: center; justify-content: center; box-shadow: 0 2px 5px rgba(60, 60, 50, .4); }
.send svg { width: 50px; height: 50px; margin-left: 10px; }

/* Keyboard */
.keyboard { flex: 1; padding: 13px 12px 17px; background: #283238; color: #c1c5c8; }
.tools { display: flex; justify-content: space-between; padding: 0 5px; margin-bottom: 36px; color: #a7adb0; }
.tool { width: 94px; height: 94px; border-radius: 50%; display: flex; align-items: center; justify-content: center; }
.filled { background: #374249; }
.mic { background: #424a51; color: #c3c7ca; }
.gif { font-size: 40px; font-weight: 900; }
.w44 { width: 44px; } .w52 { width: 52px; } .w54 { width: 54px; } .w56 { width: 56px; } .w62 { width: 62px; } .w70 { width: 70px; }
.row { display: grid; grid-template-columns: repeat(20, minmax(0, 1fr)); column-gap: 12px; margin-bottom: 27px; }
.key { position: relative; grid-column: span 2; height: 127px; border-radius: 16px; background: #424a51; display: flex; align-items: center; justify-content: center; font-size: 60px; line-height: 70px; padding-bottom: 12px; color: #d9dcde; }
.key:has(svg) { padding: 0; color: #c1c5c8; }
.inset .key:first-child { grid-column: 2 / span 2; }
.key sup { position: absolute; top: 5px; right: 6px; font-size: 28px; font-weight: 500; line-height: 32px; color: #aeb3b7; }
.wide { grid-column: span 3; }
.dark { background: #323c43; }
.round { border-radius: 64px; }
.row .sym { font-size: 38px; font-weight: 500; padding: 0; color: #a7adb0; }
.low { padding: 12px 0 0; }
.row .space { grid-column: span 8; font-size: 37px; padding: 2px 0 0; color: #a9aeb2; }
.row .enter { background: #6faea9; color: #fff; }
.home { width: 38%; height: 10px; margin: 44px auto 0; border-radius: 5px; background: #fff; }
.row:nth-last-child(2) { margin-bottom: 0; }
```
